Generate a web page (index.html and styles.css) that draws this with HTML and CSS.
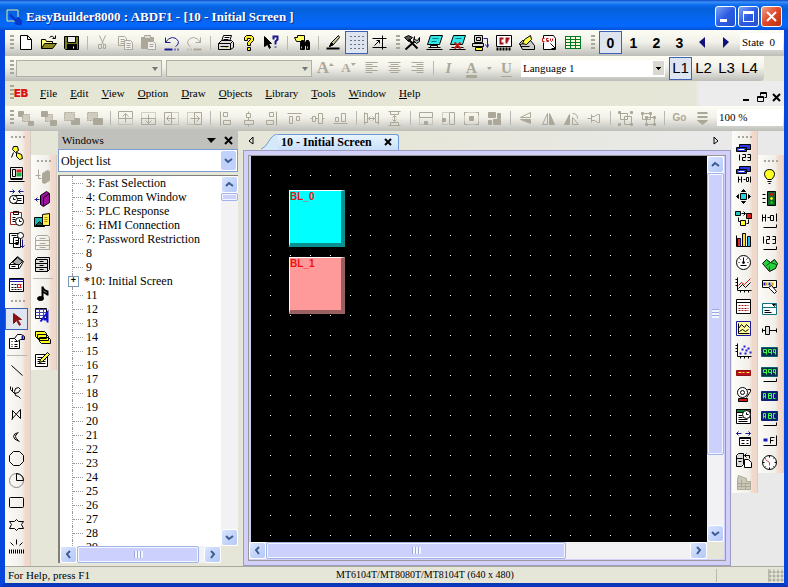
FILE: index.html
```html
<!DOCTYPE html>
<html lang="en">
<head>
<meta charset="utf-8">
<title>EasyBuilder8000</title>
<link rel="stylesheet" href="styles.css">
</head>
<body>
<div class="window">
<header class="titlebar">
  <svg class="logo" viewBox="0 0 18 18"><path d="M2 2h11v11H2z" fill="none" stroke="#d8f0a0"/><path d="M5 6l6 5 2-2 4 4-1 4-6-1 1-2-6-6z" fill="#0838c8" stroke="#0838c8"/></svg>
  <h1>EasyBuilder8000 : ABDF1 - [10 - Initial Screen ]</h1>
  <button class="cap" aria-label="Minimize"><svg viewBox="0 0 19 19"><path d="M4 12h7v3H4z" fill="#fff"/></svg></button>
  <button class="cap" aria-label="Maximize"><svg viewBox="0 0 19 19"><path d="M4 4h11v11H4zM5 7v7h9V7z" fill="#fff" fill-rule="evenodd"/></svg></button>
  <button class="cap close" aria-label="Close"><svg viewBox="0 0 19 19"><path d="M5 5l9 9M14 5l-9 9" stroke="#fff" stroke-width="2"/></svg></button>
</header>

<div class="bar" role="toolbar" aria-label="Standard">
  <i class="grip"></i>
  <button aria-label="New"><svg viewBox="-.5 -.5 17 17"><path d="M3 1h7l4 4v10H3zM10 1v4h4" fill="#fff"/></svg></button>
  <button aria-label="Open"><svg viewBox="-.5 -.5 17 17"><path d="M1 14V5h4l1 2h6v2" fill="#ffff70"/><path d="M1 14l3-5h12l-4 5z" fill="#8a8a20"/><path d="M9 3q3-3 5 1M15 1v3h-3"/></svg></button>
  <button aria-label="Save"><svg viewBox="-.5 -.5 17 17"><path d="M1 2h14v13H2l-1-1z" fill="#7a7a20"/><path d="M4 2h8v6H4z" fill="#eee"/><path d="M4 10h9v5H4z" fill="#000"/><path d="M10 12v2" stroke="#fff"/></svg></button>
  <i class="sep"></i>
  <button class="off" aria-label="Cut"><svg viewBox="-.5 -.5 17 17"><path d="M5 1l4 9M11 1L7 10M9 10h2v4h-2zM4 10h3v4H4z"/></svg></button>
  <button class="off" aria-label="Copy"><svg viewBox="-.5 -.5 17 17"><path d="M1 2h6l2 2v7H1zM3 5h4M3 7h4M3 9h4" /><path d="M7 6h6l2 2v7H7z" fill="#eee"/><path d="M9 9h4M9 11h4M9 13h4"/></svg></button>
  <button class="off" aria-label="Paste"><svg viewBox="-.5 -.5 17 17"><path d="M1 3h12v11H1z" fill="#aca899"/><path d="M4 1h6v3H4z" fill="#ddd"/><path d="M7 7h6l2 2v6H7z" fill="#eee"/><path d="M9 10h4M9 12h4"/></svg></button>
  <button class="navy" aria-label="Undo"><svg viewBox="-.5 -.5 17 17"><path d="M2 3v5h5M2 8q3-5 7-5t6 4q0 4-3 5"/><path d="M1 15h8M11 15h1M14 15h1" stroke-width="2"/></svg></button>
  <button class="off" aria-label="Redo"><svg viewBox="-.5 -.5 17 17"><path d="M14 3v5H9M14 8Q11 3 7 3T1 7q0 4 3 5"/><path d="M15 15H7M5 15H4M2 15H1" stroke-width="2"/></svg></button>
  <i class="sep"></i>
  <button aria-label="Print"><svg viewBox="-.5 -.5 17 17"><path d="M4 7l2-6h8l-2 6" fill="#fff"/><path d="M1 9l3-3h10l2 2v5l-3 2H1z" fill="#ddd"/><path d="M1 9h12v6M7 3h5M6 5h5M13 9l2-2M3 12h8" /><path d="M8 13h2" stroke="#cc0"/></svg></button>
  <button aria-label="Help"><svg viewBox="-.5 -.5 17 17"><path d="M4 6V3l2-2h5l2 2v3l-3 3v2H7V8l3-3V4H7v2z" fill="#ffec20"/><path d="M7 13h3v3H7z" fill="#ffec20"/></svg></button>
  <button aria-label="What's this"><svg viewBox="-.5 -.5 17 17"><path d="M1 2v10l3-2 2 4 1-1-2-4h3z" fill="#000"/><path d="M10 5V2h4v3l-2 2v3M12 12v1" stroke="#1a1a90" stroke-width="2"/></svg></button>
  <i class="sep"></i>
  <button aria-label="Find"><svg viewBox="-.5 -.5 17 17"><path d="M0 3h3V1h7v6H2z" fill="#ffff60"/><path d="M6 15V8l1-2h2l1 2h1l1-2h2l1 2v7h-3v-4h-2v4z" fill="#000"/><path d="M7 12v2M13 12v2" stroke="#aaa"/></svg></button>
  <i class="sep"></i>
  <button aria-label="Pen"><svg viewBox="-.5 -.5 17 17"><path d="M4 12l2-4 7-7 1 2-6 7z" fill="#cc9"/><path d="M4 12l2-4 2 2z" fill="#000"/><path d="M1 14h13" stroke-width="2"/></svg></button>
  <button class="on" aria-label="Grid" aria-pressed="true"><svg viewBox="-.5 -.5 17 17"><path d="M0 2h17M0 6h17M0 10h17M0 14h17" stroke-dasharray="1 3" stroke-dashoffset="-2"/></svg></button>
  <button aria-label="Snap"><svg viewBox="-.5 -.5 17 17"><path d="M1 4h14M1 13h14M11 1v14M3 11l5-5M5 6h3v3"/></svg></button>
  <i class="grip"></i>
  <button aria-label="Compile"><svg viewBox="-.5 -.5 17 17"><path d="M1 3l4-2 4 2-4 4z" fill="#555"/><path d="M5 5l9 9M12 6L2 15" stroke-width="2"/><path d="M11 2v3l3 1 2-3v4l-3 2-3-3z" fill="#aaa"/></svg></button>
  <button aria-label="Online simulation"><svg viewBox="-.5 -.5 17 17"><path d="M4 1h12l-3 9H1z" fill="#30e8e8"/><path d="M6 4h6M5 7h5" stroke="#077"/><path d="M4 11h7v2H4zM0 15h16M2 13h12"/></svg></button>
  <button aria-label="Offline simulation"><svg viewBox="-.5 -.5 17 17"><path d="M4 1h12l-3 9H1z" fill="#30e8e8"/><path d="M6 4h6" stroke="#077"/><path d="M0 15h16M2 13h12"/><path d="M5 8l6 6M11 8l-6 6" stroke="#c01818" stroke-width="2"/></svg></button>
  <button aria-label="Download"><svg viewBox="-.5 -.5 17 17"><path d="M2 1h8v7H2zM0 9h11v3H0z" fill="#ddd"/><path d="M4 3h4v3H4z"/><path d="M3 13h7v3H3z" fill="#ff3"/><path d="M11 4h4v8M13 10l2 3 1-3" stroke="#1a1a90"/></svg></button>
  <button aria-label="CF card"><svg viewBox="-.5 -.5 17 17"><path d="M1 1h15v11H1z" fill="#fff"/><path d="M2 13v3M5 13v3M8 13v3M11 13v3M14 13v3" stroke-width="2"/><path d="M8 4H5v5h3M14 4h-3v5M11 6h2" stroke="#a01010" stroke-width="2"/></svg></button>
  <button aria-label="Edit"><svg viewBox="-.5 -.5 17 17"><path d="M1 9l3-3h8l4 5v4H4z" fill="#ccc"/><path d="M1 10l5-1M2 12h9"/><path d="M4 9l2-4 6-4 1 4-5 5z" fill="#ffff40"/></svg></button>
  <button aria-label="CSV"><svg viewBox="-.5 -.5 17 17"><path d="M2 4V1h10l2 3v11H2V8" fill="#fff"/><path d="M9 9l5 5M14 10v4h-4"/><path d="M3 4H1v3h2M7 4H5v2h2v1H5M9 4v2l1 1 1-1V4" stroke="#d01010"/></svg></button>
  <button aria-label="Table"><svg viewBox="-.5 -.5 17 17"><path d="M1 2h15v12H1z" fill="#f8ffd8"/><path d="M1 2h15v12H1zM6 2v12M11 2v12M1 5h15M1 8h15M1 11h15" stroke="#007828"/></svg></button>
  <i class="grip wide"></i>
  <button class="num on" aria-pressed="true">0</button>
  <button class="num">1</button>
  <button class="num">2</button>
  <button class="num">3</button>
  <button aria-label="Previous state"><svg viewBox="0 0 17 17"><path d="M11 3v11L5 8z" fill="#10107a" stroke="none"/></svg></button>
  <button aria-label="Next state"><svg viewBox="0 0 17 17"><path d="M6 3v11l6-6z" fill="#10107a" stroke="none"/></svg></button>
  <input class="field" aria-label="State" value="State  0">
</div>

<div class="bar fontbar" role="toolbar" aria-label="Font">
  <i class="grip"></i>
  <span class="combo dim"><select disabled aria-label="Font"><option></option></select></span>
  <span class="combo dim"><select disabled aria-label="Size"><option></option></select></span>
  <button class="off letter big" aria-label="Larger">A<svg class="tick" viewBox="0 0 5 3"><path d="M0 3h5L2 0z"/></svg></button>
  <button class="off letter" aria-label="Smaller">A<svg class="tick" viewBox="0 0 5 3"><path d="M0 0h5L2 3z"/></svg></button>
  <button class="off" aria-label="Left"><svg viewBox="-.5 -.5 17 17"><path d="M2 2h12M2 4h7M2 6h12M2 8h7M2 10h12M2 12h7"/></svg></button>
  <button class="off" aria-label="Center"><svg viewBox="-.5 -.5 17 17"><path d="M2 2h12M4 4h8M2 6h12M4 8h8M2 10h12M4 12h8"/></svg></button>
  <button class="off" aria-label="Right"><svg viewBox="-.5 -.5 17 17"><path d="M2 2h12M7 4h7M2 6h12M7 8h7M2 10h12M7 12h7"/></svg></button>
  <i class="sep"></i>
  <button class="off letter italic">I</button>
  <button class="off letter color">A</button>
  <button class="off drop" aria-label="Font colour"><svg viewBox="0 0 5 3"><path d="M0 0h5L2 3z"/></svg></button>
  <button class="off letter under">U</button>
  <span class="combo lang"><select aria-label="Language"><option>Language 1</option></select></span>
  <button class="num lang-key on" aria-pressed="true">L1</button>
  <button class="num lang-key">L2</button>
  <button class="num lang-key">L3</button>
  <button class="num lang-key">L4</button>
</div>

<nav class="menubar">
  <i class="grip"></i>
  <strong class="eb">EB</strong>
  <button><u>F</u>ile</button><button><u>E</u>dit</button><button><u>V</u>iew</button><button><u>O</u>ption</button><button><u>D</u>raw</button><button><u>O</u>bjects</button><button><u>L</u>ibrary</button><button><u>T</u>ools</button><button><u>W</u>indow</button><button><u>H</u>elp</button>
  <span class="mdi">
    <button aria-label="Minimize window"><svg viewBox="0 0 10 10"><path d="M1 8h6" stroke-width="2"/></svg></button>
    <button aria-label="Restore window"><svg viewBox="-.5 -.5 10 10"><path d="M3 3V0h6v5H7M3 1h6M0 4h6v5H0zM0 5h6"/></svg></button>
    <button aria-label="Close window"><svg viewBox="0 0 10 10"><path d="M1 2l7 7M8 2L1 9" stroke-width="2"/></svg></button>
  </span>
</nav>

<div class="bar arrange" role="toolbar" aria-label="Arrange">
  <i class="grip"></i>
  <button class="off" aria-label="Front"><svg viewBox="-.5 -.5 17 17"><path class="s" d="M1 1h5v5H1zM11 11h5v4h-5z"/><path class="h" d="M5 4h7v7H5z"/></svg></button>
  <button class="off" aria-label="Back"><svg viewBox="-.5 -.5 17 17"><path class="h" d="M5 4h7v7H5z"/><path class="s" d="M1 1h6v5H1zM10 10h6v5h-6z"/></svg></button>
  <button class="off" aria-label="Forward"><svg viewBox="-.5 -.5 17 17"><path class="s" d="M8 8h8v6H8z"/><path class="h" d="M1 2h10v8H1z"/></svg></button>
  <button class="off" aria-label="Backward"><svg viewBox="-.5 -.5 17 17"><path class="h" d="M1 2h10v8H1z"/><path class="s" d="M7 8h9v6H7z"/></svg></button>
  <i class="sep"></i>
  <button class="off" aria-label="Nudge up"><svg viewBox="-.5 -.5 17 17"><path d="M1 8V1h14v7zM8 12V3M5 6l3-3 3 3"/><path class="d" d="M1 8v6h14V8"/></svg></button>
  <button class="off" aria-label="Nudge down"><svg viewBox="-.5 -.5 17 17"><path d="M1 14V8h14v6zM8 4v9M5 10l3 3 3-3"/><path class="d" d="M1 8V2h14v6"/></svg></button>
  <button class="off" aria-label="Nudge left"><svg viewBox="-.5 -.5 17 17"><path d="M1 2h7v12H1zM3 8h9M6 5L3 8l3 3"/><path class="d" d="M8 2h7v12H8"/></svg></button>
  <button class="off" aria-label="Nudge right"><svg viewBox="-.5 -.5 17 17"><path d="M8 2h7v12H8zM13 8H4M10 5l3 3-3 3"/><path class="d" d="M8 2H1v12h7"/></svg></button>
  <i class="sep"></i>
  <button class="off" aria-label="Align left"><svg viewBox="-.5 -.5 17 17"><path d="M3 1v14M6 2h4v4H6zM6 10h7v4H6z"/></svg></button>
  <button class="off" aria-label="Align middle"><svg viewBox="-.5 -.5 17 17"><path d="M8 1v2M8 7v3M8 14v2M6 3h4v4H6zM4 10h9v4H4z"/></svg></button>
  <button class="off" aria-label="Align right"><svg viewBox="-.5 -.5 17 17"><path d="M13 1v14M6 2h4v4H6zM3 10h7v4H3z"/></svg></button>
  <button class="off" aria-label="Align top"><svg viewBox="-.5 -.5 17 17"><path d="M1 3h14M3 6h3v7H3zM10 6h3v4h-3z"/></svg></button>
  <button class="off" aria-label="Align centre"><svg viewBox="-.5 -.5 17 17"><path d="M1 8h2M6 8h3M13 8h2M3 6h3v5H3zM9 3h4v10H9z"/></svg></button>
  <button class="off" aria-label="Align bottom"><svg viewBox="-.5 -.5 17 17"><path d="M1 13h14M3 7h3v4H3zM9 3h4v8H9z"/></svg></button>
  <i class="sep"></i>
  <button class="off" aria-label="Space across"><svg viewBox="-.5 -.5 17 17"><path d="M1 2v12M15 2v12M1 3h3v9H1M15 3h-3v9h3M5 8h6M7 6L5 8l2 2M9 6l2 2-2 2"/></svg></button>
  <button class="off" aria-label="Space down"><svg viewBox="-.5 -.5 17 17"><path d="M2 1h12M2 15h12M4 1v3h8V1M4 15v-3h8v3M8 5v6M6 7l2-2 2 2M6 9l2 2 2-2"/></svg></button>
  <i class="sep"></i>
  <button class="off" aria-label="Same width"><svg viewBox="-.5 -.5 17 17"><path d="M2 2h13v5H2z"/><path class="d" d="M2 8v6h13V8"/><path class="s" d="M7 11h3v3H7z"/></svg></button>
  <button class="off" aria-label="Same height"><svg viewBox="-.5 -.5 17 17"><path d="M9 2h5v12H9z"/><path class="d" d="M8 2H2v12h6"/><path class="s" d="M2 8h3v3H2z"/></svg></button>
  <button class="off" aria-label="Same size"><svg viewBox="-.5 -.5 17 17"><path class="d" d="M1 2h14v12H1z"/><path d="M3 2H1v3M13 2h2v3M1 11v3h3M15 11v3h-3"/><path class="s" d="M6 6h4v4H6z"/></svg></button>
  <button class="off" aria-label="Layers"><svg viewBox="-.5 -.5 17 17"><path class="s" d="M2 2h7v5H2zM7 9h7v5H7zM11 3h3v5h-3zM2 10h3v4H2z"/></svg></button>
  <i class="sep"></i>
  <button class="off" aria-label="Flip vertical"><svg viewBox="-.5 -.5 17 17"><path d="M13 2v5H3z"/><path class="s" d="M3 9h10v4z"/></svg></button>
  <button class="off" aria-label="Flip horizontal"><svg viewBox="-.5 -.5 17 17"><path d="M7 3v11H2z"/><path class="s" d="M9 3v11h5z"/></svg></button>
  <button class="off" aria-label="Rotate"><svg viewBox="-.5 -.5 17 17"><path class="s" d="M6 4v10H1z"/><path d="M9 7l6 7H9zM9 3q5 0 5 5"/></svg></button>
  <button class="off" aria-label="Pin"><svg viewBox="-.5 -.5 17 17"><path d="M1 8h4M5 4v8M5 6h3l3-2h2v8h-2l-3-2H5"/></svg></button>
  <i class="sep"></i>
  <button class="off" aria-label="Group"><svg viewBox="-.5 -.5 17 17"><path d="M3 3h7v6H3zM7 6h7v8H7z"/><path class="s" d="M1 1h2v2H1zM13 1h2v2h-2zM1 13h2v2H1zM13 13h2v2h-2z"/></svg></button>
  <button class="off" aria-label="Ungroup"><svg viewBox="-.5 -.5 17 17"><path d="M2 3h8v6H2zM6 7h8v7H6z"/><path class="s" d="M1 2h2v2H1zM9 2h2v2H9zM5 13h2v2H5zM13 13h2v2h-2zM13 6h2v2h-2zM5 6h2v2H5z"/></svg></button>
  <i class="sep"></i>
  <button class="off go">Go</button>
  <button class="off" aria-label="More"><svg viewBox="-.5 -.5 17 17"><path d="M3 2h10M3 3h10M3 6h10M3 7h10"/><path class="s" d="M3 10h10l-5 4z"/></svg></button>
  <input class="field" aria-label="Zoom" value="100 %">
</div>

<main class="work">
  <div class="col" role="toolbar" aria-label="Draw">
    <i class="grip h"></i>
    <button aria-label="Key"><svg viewBox="-.5 -.5 17 17"><path d="M5 2h4l1 4-3 2-3-3z" fill="#ffff30"/><path d="M5 8l-2 5M8 8l5 2 1 4-3 1-3-3z" fill="#ffff30"/></svg></button>
    <button aria-label="System"><svg viewBox="-.5 -.5 17 17"><path d="M2 1h12v11H2z" fill="#eee"/><path d="M4 3h3v7H4zM0 15h16M2 13h12"/><path d="M8 3h5v3H8z" fill="#e02020" stroke="none"/><path d="M8 6h5v4H8z" fill="#20b040" stroke="none"/></svg></button>
    <button aria-label="Schedule"><svg viewBox="-.5 -.5 17 17"><path d="M1 3h5M4 1l2 2-2 2M15 3h-5M12 1l-2 2 2 2" stroke="#1a1a90"/><path d="M4 7h11v8H4z" fill="#fff"/><path d="M9 10h4M9 12h4"/><circle cx="5" cy="11" r="4" fill="#fff"/><path d="M5 9v2h2"/></svg></button>
    <button aria-label="Recipe"><svg viewBox="-.5 -.5 17 17"><path d="M2 2h11v12H2z" fill="#fff" stroke="#a02020"/><path d="M5 1h5v3H5zM4 7h3M4 9h3M4 11h3"/><circle cx="11" cy="11" r="4" fill="#fff"/><path d="M11 9v2h2"/></svg></button>
    <button aria-label="Log"><svg viewBox="-.5 -.5 17 17"><path d="M1 1h9v10H1zM5 5h7v10H5z" fill="#fff"/><path d="M3 3h5M7 8h3M7 10h3M7 12h3"/><circle cx="12" cy="3" r="3" fill="#fff"/><path d="M14 7v8M12 13l2 2 2-2" stroke="#1a1a90"/></svg></button>
    <button aria-label="Card"><svg viewBox="-.5 -.5 17 17"><path d="M1 10l8-8 6 5-4 7H1z" fill="#fff"/><path d="M4 8l5-5 5 4-4 4z" fill="#aaa"/><path d="M1 10h9v4H1zM3 12h4" fill="#fff"/></svg></button>
    <button aria-label="Calendar"><svg viewBox="-.5 -.5 17 17"><path d="M1 2h14v13H1z" fill="#fff"/><path d="M1 3h14M1 5h14" stroke="#2020a0"/><path d="M3 8h10M3 11h10M3 13h10" stroke-dasharray="2 1"/><path d="M9 8h3v3H9z" stroke="#d01010"/></svg></button>
    <i class="grip h tall"></i>
    <button class="on" aria-label="Select" aria-pressed="true"><svg viewBox="-.5 -.5 17 17"><path d="M5 2v10l3-3 3 5 1-1-3-5h4z" fill="#8c1010" stroke="#8c1010"/></svg></button>
    <button aria-label="Properties"><svg viewBox="-.5 -.5 17 17"><path d="M1 5h10v10H1z" fill="#fff"/><path d="M3 8h1M6 8h3M3 11h1M6 11h3M3 13h1M6 13h3"/><path d="M6 5l3-4h4l3 2v3h-4l-3 2z" fill="#fff"/><path d="M14 2v4" stroke="#1a1a90" stroke-width="2"/></svg></button>
    <i class="sep h"></i>
    <button aria-label="Line"><svg viewBox="-.5 -.5 17 17"><path d="M3 3l11 10"/></svg></button>
    <button aria-label="Curve"><svg viewBox="-.5 -.5 17 17"><path d="M2 2v3l4 4 4-1 2-3-2-2-3 1-1 3 1 4 3 1 2 2M4 3v4"/></svg></button>
    <button aria-label="Polyline"><svg viewBox="-.5 -.5 17 17"><path d="M4 13V4l8 8V3L3 13"/></svg></button>
    <button aria-label="Arc"><svg viewBox="-.5 -.5 17 17"><path d="M10 4q-5 1-5 4t6 5M9 5q-2 1-2 3t3 4"/></svg></button>
    <button aria-label="Ellipse"><svg viewBox="-.5 -.5 17 17"><path d="M5 1h6l4 4v6l-4 4H5l-4-4V5z"/></svg></button>
    <button aria-label="Pie"><svg viewBox="-.5 -.5 17 17"><circle cx="8" cy="8" r="7" stroke="#888"/><path d="M8 1v7h7q0-6-7-7z"/></svg></button>
    <button aria-label="Rectangle"><svg viewBox="-.5 -.5 17 17"><rect x="1" y="3" width="14" height="10" rx="1"/></svg></button>
    <button aria-label="Polygon"><svg viewBox="-.5 -.5 17 17"><path d="M8 3l2 2h5l-2 3 2 4h-5l-2 2-2-2H1l2-4-2-3h5z"/></svg></button>
    <button aria-label="Scale"><svg viewBox="-.5 -.5 17 17"><path d="M1 11v4M3 11v4M5 11v4M7 11v4M9 11v4M11 11v4M13 11v4M15 11v4M8 1v5M2 4l3 3M14 4l-3 3"/></svg></button>
    <button aria-label="Text"><svg viewBox="-.5 -.5 17 17"><path d="M6 7h2M11 6v2M5 8h4"/></svg></button>
  </div>
  <div class="col short" role="toolbar" aria-label="Library">
    <i class="grip h"></i>
    <button class="off" aria-label="Import"><svg viewBox="-.5 -.5 17 17"><path class="s" d="M8 5l5-3 2 1v9l-5 3-2-1z"/><path d="M1 7h5M4 1v9h3"/></svg></button>
    <button aria-label="Library"><svg viewBox="-.5 -.5 17 17"><path d="M6 5l6-4 3 2v9l-6 4-3-2z" fill="#a010a0"/><path d="M9 7l6-4M9 7v8"/><path d="M0 9h5M3 7L1 9l2 2" stroke="#1a1a90"/></svg></button>
    <button aria-label="Pictures"><svg viewBox="-.5 -.5 17 17"><path d="M0 5h10v9H0z" fill="#20b8b8"/><path d="M1 13l4-4 4 4z" fill="#086040"/><path d="M8 2l7-1v12H8z" fill="#fff050"/><path d="M10 5h3M10 7h3M10 9h3" stroke="#a80"/></svg></button>
    <button class="off" aria-label="Drawer"><svg viewBox="-.5 -.5 17 17"><path d="M1 3l2-2h10l2 2v12H1zM1 6h14M1 11h14M5 4h6M5 9h6M5 13h6"/></svg></button>
    <button aria-label="Cabinet"><svg viewBox="-.5 -.5 17 17"><path d="M1 3l2-2h12v12l-2 2H1z" fill="#ddd"/><path d="M1 3h12v12M1 7h12M1 11h12M5 5h4M5 9h4M5 13h4"/></svg></button>
    <i class="sep h"></i>
    <button aria-label="Sound"><svg viewBox="-.5 -.5 17 17"><path d="M8 13V1q0 3 5 5v4M8 6l5 3" stroke-width="2"/><ellipse cx="6" cy="13" rx="3" ry="2" fill="#000"/></svg></button>
    <button aria-label="Label"><svg viewBox="-.5 -.5 17 17"><path d="M1 1h11v10H1z" fill="#fff"/><path d="M1 2h11M1 5h11M1 8h11M5 1v10M9 1v10" stroke="#44a"/><path d="M6 14l7-9v10M9 12h4" stroke="#1010e0" stroke-width="2"/></svg></button>
    <button aria-label="Tags"><svg viewBox="-.5 -.5 17 17"><path d="M1 2h9l2 2v5H3L1 7zM3 5h9l2 2v4H5L3 9zM5 8h9l2 2v4H7l-2-2z" fill="#ffff20"/></svg></button>
    <button aria-label="Macro"><svg viewBox="-.5 -.5 17 17"><path d="M1 3h12v12H1z" fill="#fff"/><path d="M3 6h8M3 8h8M3 10h8M3 12h8"/><path d="M5 11l1-3 7-7 2 2-7 7z" fill="#ff3"/></svg></button>
  </div>

  <section class="panel">
    <header class="panelhead"><h2>Windows</h2>
      <button aria-label="Menu"><svg viewBox="0 0 9 5"><path d="M0 0h9L4 5z" fill="#000" stroke="none"/></svg></button>
      <button aria-label="Close panel"><svg viewBox="0 0 9 9"><path d="M1 1l7 7M8 1L1 8" stroke-width="2"/></svg></button>
    </header>
    <span class="combo objects"><select aria-label="List kind"><option>Object list</option></select><svg class="chev" viewBox="-3 -5 15 19"><path d="M1 3l3 3 4-3"/></svg></span>
    <div class="treebox">
      <ul class="tree">
        <li>3: Fast Selection</li><li>4: Common Window</li><li>5: PLC Response</li><li>6: HMI Connection</li><li>7: Password Restriction</li><li>8</li><li>9</li><li class="node">*10: Initial Screen</li><li>11</li><li>12</li><li>13</li><li>14</li><li>15</li><li>16</li><li>17</li><li>18</li><li>19</li><li>20</li><li>21</li><li>22</li><li>23</li><li>24</li><li>25</li><li>26</li><li>27</li><li>28</li><li>29</li>
      </ul>
      <div class="sb v"><button aria-label="Up"><svg viewBox="0 0 9 9"><path d="M1 6l3-3 4 3"/></svg></button><i class="thumb t1"></i><i class="fill"></i><button aria-label="Down"><svg viewBox="0 0 9 9"><path d="M1 3l3 3 4-3"/></svg></button></div>
      <div class="sb x"><button aria-label="Left"><svg viewBox="0 0 9 9"><path d="M6 1L3 4l3 4"/></svg></button><i class="thumb t2"></i><i class="fill"></i><button aria-label="Right"><svg viewBox="0 0 9 9"><path d="M3 1l3 3-3 4"/></svg></button></div>
    </div>
  </section>

  <section class="doc">
    <div class="tabs">
      <button class="nav" aria-label="Previous tab"><svg viewBox="0 0 7 10"><path d="M5 1v7L1 5z"/></svg></button>
      <div class="tab"><svg class="slope" viewBox="0 0 17 16"><path d="M0 16Q4 15 8 7T17 0v16z" fill="#d5e9fb" stroke="none"/><path d="M0 15Q4 14 8 7T17 0" stroke="#6f9cd0"/></svg><span>10 - Initial Screen</span><button aria-label="Close tab"><svg viewBox="0 0 9 9"><path d="M1 1l6 6M7 1L1 7" stroke-width="2"/></svg></button></div>
      <button class="nav last" aria-label="Next tab"><svg viewBox="0 0 7 10"><path d="M1 1v7l4-3z"/></svg></button>
    </div>
    <div class="frame">
      <div class="canvas">
        <div class="lamp bl0">BL_0</div>
        <div class="lamp bl1">BL_1</div>
      </div>
      <div class="sb v"><button aria-label="Up"><svg viewBox="0 0 9 9"><path d="M1 6l3-3 4 3"/></svg></button><i class="thumb t3"></i><i class="fill"></i><button aria-label="Down"><svg viewBox="0 0 9 9"><path d="M1 3l3 3 4-3"/></svg></button></div>
      <div class="sb x"><button aria-label="Left"><svg viewBox="0 0 9 9"><path d="M6 1L3 4l3 4"/></svg></button><i class="thumb t4"></i><i class="fill"></i><button aria-label="Right"><svg viewBox="0 0 9 9"><path d="M3 1l3 3-3 4"/></svg></button></div>
    </div>
  </section>

  <div class="col end" role="toolbar" aria-label="Objects">
    <i class="grip h"></i>
    <button aria-label="Set word"><svg viewBox="-.5 -.5 17 17"><path d="M4 0h11v5H4zM1 3h10v4H1z" fill="#2838e0"/><path d="M3 5h6" stroke="#fff"/><path d="M4 10v6M7 10h3v3H7v3h3M12 10h3v6h-3M12 13h3"/></svg></button>
    <button aria-label="Set bit"><svg viewBox="-.5 -.5 17 17"><path d="M4 0h11v5H4zM1 3h10v4H1z" fill="#2838e0"/><path d="M3 5h6" stroke="#fff"/><path d="M3 10v6M3 13h2M6 10v6M8 13h2M11 11h2v4h-2zM15 10v6"/></svg></button>
    <button aria-label="Move"><svg viewBox="-.5 -.5 17 17"><path d="M5 5h6v6H5z" fill="#20d8e0"/><path d="M8 1l2 2H6zM8 15l2-2H6zM1 8l2-2v4zM15 8l-2-2v4z" fill="#000"/></svg></button>
    <button aria-label="Animation"><svg viewBox="-.5 -.5 17 17"><path d="M0 1h5v4H0z" fill="#20c8c8"/><path d="M11 3h5v5h-5z" fill="#e01818"/><path d="M5 10h5v5H5z" fill="#ff3"/><path d="M6 3h4M8 1l2 2-2 2M3 7v4h2M13 9v4h-2"/></svg></button>
    <button aria-label="Bar graph"><svg viewBox="-.5 -.5 17 17"><path d="M1 3v11h14"/><path d="M2 6h3v8H2z" fill="#e03020"/><path d="M7 1h3v13H7z" fill="#ffe020"/><path d="M12 4h3v10h-3z" fill="#20b8f0"/><path d="M5 6v8M10 2v12" stroke="#1818a0"/></svg></button>
    <button aria-label="Meter"><svg viewBox="-.5 -.5 17 17"><circle cx="8" cy="8" r="7" fill="#fff"/><path d="M8 3v5M3 8h1M12 8h1M4 4l1 1M12 4l-1 1M5 11h6"/><circle cx="8" cy="8" r="1" fill="#000"/></svg></button>
    <button aria-label="Trend"><svg viewBox="-.5 -.5 17 17"><path d="M2 1v13h14M0 3h2M0 6h2M0 9h2M5 14v2M9 14v2M13 14v2"/><path d="M3 9l3-3 3 2 6-6" stroke="#e01010"/><path d="M3 12l4-4 3 3 5-5"/></svg></button>
    <button aria-label="History table"><svg viewBox="-.5 -.5 17 17"><path d="M1 1h14v14H1zM1 4h14" fill="#fff"/><path d="M3 7h10M3 10h10M3 12h10" stroke="#901010" stroke-dasharray="2 1"/></svg></button>
    <button aria-label="Picture trend"><svg viewBox="-.5 -.5 17 17"><path d="M1 1h14v14H1z" fill="#ffffa0" stroke="#1818a0"/><path d="M3 3v10h11M3 8l3-4 3 3 2-3 3 3M4 11l3-2 3 2 3-2"/></svg></button>
    <button aria-label="Scatter"><svg viewBox="-.5 -.5 17 17"><path d="M2 1v13h14M0 3h2M0 6h2M0 9h2M5 14v2M9 14v2M13 14v2"/><path d="M4 11h2M6 7h2M8 4h2M10 8h2M12 6h2M14 10h2M9 11h2" stroke="#2020d0" stroke-width="2"/></svg></button>
    <button aria-label="Alarm bar"><svg viewBox="-.5 -.5 17 17"><path d="M1 6h14v5H1z" fill="#c01020" stroke="#901010"/><path d="M3 8h3M7 8h2M11 8h3" stroke="#ff3"/></svg></button>
    <button aria-label="Alarm"><svg viewBox="-.5 -.5 17 17"><circle cx="7" cy="6" r="5" fill="#fff"/><circle cx="7" cy="6" r="2"/><path d="M12 3h3M15 3v2l-4 6"/><path d="M3 12h9v3H3z" fill="#d01818"/></svg></button>
    <button aria-label="Event log"><svg viewBox="-.5 -.5 17 17"><path d="M1 1h14v14H1z" fill="#fff"/><path d="M1 1h14v3H1z" fill="#108030"/><path d="M3 7h4M3 9h4M3 11h9M3 13h9"/><circle cx="11" cy="6" r="4" fill="#fff"/><path d="M11 4v2h2"/></svg></button>
    <button aria-label="Transfer"><svg viewBox="-.5 -.5 17 17"><path d="M1 3h5M3 1L1 3l2 2M10 3h5M13 1l2 2-2 2" stroke="#1a1a90"/><path d="M4 7h11v8H4z" fill="#fff"/><path d="M4 8h11M6 10h3M11 10h2M6 13h3M11 13h2"/></svg></button>
    <button aria-label="Backup"><svg viewBox="-.5 -.5 17 17"><path d="M1 3l2-2h5v11l-2 2H1zM1 6h6M3 9h3" fill="#ddd"/><path d="M9 7h4l3 3v5H9z" fill="#fff"/><path d="M9 3h5v3M11 1L9 3l2 2"/></svg></button>
    <button class="off" aria-label="Media"><svg viewBox="-.5 -.5 17 17"><path d="M2 5l1-4 8 3v3h4v8H2z" fill="#ccc8b8"/><path d="M2 9h13M2 12h13M6 5v8M10 9v6"/></svg></button>
  </div>
  <div class="col short end" role="toolbar" aria-label="Parts">
    <i class="grip h"></i>
    <button aria-label="Bit lamp"><svg viewBox="-.5 -.5 17 17"><path d="M6 11q-3-3-3-5 0-5 5-5t5 5q0 2-3 5z" fill="#ffff20"/><path d="M6 13h4M7 15h2"/></svg></button>
    <button aria-label="Word lamp"><svg viewBox="-.5 -.5 17 17"><path d="M6 1h8v14H6z" fill="#186030"/><circle cx="10" cy="4" r="1" fill="red" stroke="red"/><circle cx="10" cy="8" r="1" fill="#ff0" stroke="#ff0"/><circle cx="10" cy="12" r="1" fill="#0d0" stroke="#0d0"/><path d="M1 4h3M1 8h3M1 12h3"/></svg></button>
    <button aria-label="Bit switch"><svg viewBox="-.5 -.5 17 17"><path d="M1 2v7M1 5h3M4 2v7M6 5h3M9 3h3v5H9zM15 1v8M15 12v3H2"/></svg></button>
    <button aria-label="Word switch"><svg viewBox="-.5 -.5 17 17"><path d="M2 2v7M5 2h3v3H5v4h3M11 2h3v7h-3M11 5h3M15 12v3H2"/></svg></button>
    <button aria-label="Function key"><svg viewBox="-.5 -.5 17 17"><path d="M1 7l4-4 4 3 4-3 3 4-2 5-6 3z" fill="#28d040"/><path d="M5 9l4-3 6 2M8 14v-4" stroke="#085018"/></svg></button>
    <button aria-label="Toggle"><svg viewBox="-.5 -.5 17 17"><path d="M1 2h14v7H1z" fill="#ffffd8"/><path d="M3 4v3M8 4v3" stroke="#1818d0" stroke-width="2"/><path d="M5 4v3M11 4v3" stroke="#c90" stroke-width="2"/><path d="M7 9l3-2 5 6-2 2-4-4z" fill="#fff"/></svg></button>
    <button aria-label="Option list"><svg viewBox="-.5 -.5 17 17"><path d="M1 3h14v4H1zM1 7h14v7H1z" fill="#fff" stroke="#107080"/><path d="M11 4h3l-1 2zM3 10h5M3 12h7"/></svg></button>
    <button aria-label="Slider"><svg viewBox="-.5 -.5 17 17"><path d="M1 8h3M8 8h7M4 4h4v8H4zM15 6v4M1 6v4" fill="#ddd"/></svg></button>
    <button aria-label="Numeric display"><svg viewBox="-.5 -.5 17 17"><path d="M0 3h16v9H0z" fill="#053050" stroke="#106070"/><path d="M5 8H2V5h3v5M10 8H7V5h3v5M14 8h-2V5h2v5" stroke="#40ff40"/></svg></button>
    <button aria-label="Numeric input"><svg viewBox="-.5 -.5 17 17"><path d="M0 1h16v9H0z" fill="#053050" stroke="#106070"/><path d="M5 6H2V3h3v5M10 6H7V3h3v5M14 6h-2V3h2v5" stroke="#40ff40"/><path d="M15 12v3H2"/></svg></button>
    <button aria-label="Text display"><svg viewBox="-.5 -.5 17 17"><path d="M0 3h16v9H0z" fill="#082070" stroke="#102080"/><path d="M2 10V5h2v5M2 8h2M7 5h3v5H7zM7 7h3M14 5h-2v5h2" stroke="#40ff40"/></svg></button>
    <button aria-label="Text input"><svg viewBox="-.5 -.5 17 17"><path d="M0 1h16v9H0z" fill="#082070" stroke="#102080"/><path d="M2 8V3h2v5M2 6h2M7 3h3v5H7zM7 5h3M14 3h-2v5h2" stroke="#40ff40"/><path d="M15 12v3H2"/></svg></button>
    <button aria-label="Keypad"><svg viewBox="-.5 -.5 17 17"><path d="M3 7h2v1H3z" stroke="#1818c0" stroke-width="2"/><path d="M9 11V5h4M9 8h3M15 3v10H2"/></svg></button>
    <button aria-label="Clock"><svg viewBox="-.5 -.5 17 17"><circle cx="8" cy="8" r="7" fill="#fff"/><path d="M8 1v2M8 13v2M1 8h2M13 8h2M3 3l1 1M13 3l-1 1M3 13l1-1M13 13l-1-1"/><path d="M8 11V8L4 5" stroke="#e04040"/></svg></button>
  </div>
</main>

<footer class="status"><span>For Help, press F1</span><span class="model">MT6104T/MT8080T/MT8104T (640 x 480)</span><span class="cell"></span><span class="cell corner"></span></footer>
</div>
</body>
</html>
```
FILE: styles.css
```css
* { box-sizing: border-box; }
body {
  margin: 0;
  height: 100vh;
  overflow: hidden;
  font: 12px/14px "Liberation Serif", serif;
  color: #000;
}
button, select, input { font: inherit; color: inherit; margin: 0; }
button { border: 0; padding: 0; background: none; }
i { font-style: normal; }
svg { fill: none; stroke: #000; display: block; flex: none; }

.window {
  height: 100%;
  display: flex;
  flex-direction: column;
  background: #e6e6d8;
  border: solid #0646dc;
  border-width: 0 4px 4px 5px;
  border-bottom-color: #0838b8;
}

/* title bar */
.titlebar {
  flex: none;
  display: flex;
  align-items: center;
  gap: 4px;
  height: 30px;
  margin: 0 -4px 0 -5px;
  padding: 3px 6px 0 5px;
  background: linear-gradient(#0848c8, #3c90f8 2px, #0a6cf0 5px, #0560d8 9px, #0565f0 18px, #0568ff 26px, #0450d0);
}
.titlebar h1 {
  flex: 1;
  margin: 0;
  font-size: 13px;
  line-height: 16px;
  color: #fff;
  text-shadow: 1px 1px #0a2a80;
}
.logo { width: 18px; height: 18px; margin-right: -1px; }
.cap {
  width: 21px;
  height: 21px;
  margin-right: -2px;
  border: 1px solid #fff;
  border-radius: 3px;
  background: linear-gradient(135deg, #7ba4f4, #2c5ce4 50%, #2450d0);
}
.cap svg { width: 19px; height: 19px; stroke: none; }
.close { margin-right: 0; background: linear-gradient(135deg, #f0a088, #e04828 50%, #b83010); }

/* horizontal toolbars */
.bar {
  flex: none;
  display: flex;
  align-items: center;
  height: 26px;
  padding-bottom: 1px;
  background: linear-gradient(#fefdf4, #f3f2ea 45%, #d2d2cc 80%, #bebeb8);
}
.bar button {
  flex: none;
  width: 23px;
  height: 23px;
  display: flex;
  align-items: center;
  justify-content: center;
}
.bar button svg { width: 17px; height: 17px; }
.grip {
  flex: none;
  width: 9px;
  height: 16px;
  background: conic-gradient(from 90deg at 2px 2px, transparent 270deg, #a8a89a 0) 3px 0 / 6px 4px repeat-y;
}
.grip.wide { width: 15px; background-position: 5px 0; }
.sep {
  flex: none;
  width: 8px;
  height: 14px;
  background: linear-gradient(#b8b8b0, #b8b8b0) center / 1px 100% no-repeat;
}
.off { color: #aca899; }
.off svg { stroke: #aca899; }
.off .s { fill: #aca899; }
.off .h { fill: #d0cdc0; stroke-dasharray: 2 1; }
.off .d { stroke-dasharray: 1 1; }
.navy svg { stroke: #1a1a90; }
.bar .on, .col .on {
  background: #dfe5f0;
  border: 1px solid #3c62b8;
}
.bar .num { font: bold 14px/20px "Liberation Sans", sans-serif; }
.bar .lang-key { font-size: 15px; font-weight: normal; }
.field {
  flex: 1;
  min-width: 0;
  height: 17px;
  margin: 0 1px 2px 3px;
  padding: 0 2px;
  border: 0;
  background: #fff;
  white-space: pre;
  font-size: 11px;
}

/* font toolbar */
.fontbar { height: 25px; margin-right: 20px; padding-right: 3px; border-radius: 0 0 4px 0; }
.combo { position: relative; display: flex; flex: none; }
.combo select {
  width: 100%;
  padding: 0 4px;
  appearance: none;
  border: 0;
  border-radius: 0;
  background: #fff;
}
.combo::after {
  content: "";
  position: absolute;
  right: 4px;
  top: 7px;
  border: solid transparent;
  border-width: 4px 3px 0;
  border-top-color: #777;
  pointer-events: none;
}
.combo.dim { width: 146px; height: 17px; margin: 0 2px; }
.combo.dim select { background: #e6e6d8; border: 1px solid #b0b0a4; opacity: 1; }
.bar .letter { font: bold 15px/16px "Liberation Serif", serif; }
.bar .letter:has(.tick) { font-size: 13px; }
.bar .letter.big { font-size: 17px; }
.bar .letter .tick, .bar .drop svg { width: 5px; height: 3px; fill: #aca899; stroke: none; }
.bar .letter .tick { margin-bottom: 8px; }
.bar .letter.italic { font-style: italic; }
.letter.color { text-decoration: underline 3px; text-underline-offset: 2px; }
.letter.under { text-decoration: underline; text-underline-offset: 3px; }
.bar .drop { width: 12px; }
.combo.lang { flex: 1; height: 17px; margin: 0 4px 0 3px; font-size: 11px; }
.combo.lang select { padding: 0 2px; }
.combo.lang::after {
  border: 0;
  top: 1px;
  right: 1px;
  width: 11px;
  height: 14px;
  background:
    linear-gradient(#000, #000) 3px 6px / 5px 1px no-repeat,
    linear-gradient(#000, #000) 4px 7px / 3px 1px no-repeat,
    linear-gradient(#000, #000) 5px 8px / 1px 1px no-repeat,
    #d8d8d0;
}

/* menu bar */
.menubar {
  flex: none;
  display: flex;
  align-items: center;
  height: 25px;
  padding-bottom: 1px;
  background: linear-gradient(90deg, #e6e6d4, #e6e6d8 690px, #ececec 695px);
}
.menubar > button { margin-right: 13px; font-size: 11px; line-height: 16px; }
.eb { width: 26px; font: 900 11px/14px Inter, "Liberation Sans", sans-serif; color: #e01010; }
.mdi { margin-left: auto; display: flex; gap: 5px; padding: 8px 2px 0 0; }
.mdi svg { width: 10px; height: 10px; }

.arrange { height: 25px; }
.bar .go { font: bold 10px/14px "Liberation Sans", sans-serif; }

/* main area */
.work {
  flex: 1;
  min-height: 0;
  display: flex;
  background: linear-gradient(90deg, #e6e6d8 50%, #e9e9e9 90%);
}
.col {
  flex: none;
  width: 26px;
  display: flex;
  flex-direction: column;
  align-items: flex-start;
  overflow: hidden;
  background: linear-gradient(90deg, #fdfcf8, #f0efe9 65%, #f2d8c9 80%, #eed8cc 94%, #c9c9c0);
}
.col.short { margin-top: 24px; align-self: flex-start; }
.col.end { align-self: flex-start; }
.col button {
  flex: none;
  width: 23px;
  height: 22px;
  display: flex;
  align-items: center;
  justify-content: center;
}
.col svg { width: 17px; height: 17px; }
.grip.h {
  width: 16px;
  height: 10px;
  margin-left: 4px;
  background: conic-gradient(from 90deg at 2px 2px, transparent 270deg, #a8a89a 0) 0 5px / 4px 10px repeat-x;
}
.grip.h.tall { height: 13px; }
.sep.h {
  width: 20px;
  height: 7px;
  margin-left: 2px;
  background: linear-gradient(#b8b8b0, #b8b8b0) center / 100% 1px no-repeat;
}

/* windows panel */
.panel {
  flex: none;
  width: 180px;
  display: flex;
  flex-direction: column;
  margin: 0 5px 3px 1px;
}
.panelhead {
  display: flex;
  align-items: center;
  gap: 8px;
  height: 18px;
  padding: 0 5px 0 4px;
  background: #c0c0bc;
}
.panelhead h2 { flex: 1; margin: 0; font-size: 11px; font-weight: normal; }
.panelhead button svg { width: 9px; height: 9px; }
.panelhead button:first-of-type svg { height: 5px; }
.objects { height: 23px; margin-bottom: 3px; }
.objects select { border: 1px solid #7a9cd0; padding: 0 2px; }
.objects::after { content: none; }
.chev {
  position: absolute;
  right: 2px;
  top: 2px;
  width: 15px;
  height: 19px;
  border-radius: 2px;
  background: #c0d2fc;
  stroke: #3c5c90;
  stroke-width: 2;
  pointer-events: none;
}
.treebox {
  flex: 1;
  min-height: 0;
  display: grid;
  grid-template: minmax(0, 1fr) 17px / minmax(0, 1fr) 17px;
  border: solid #808078;
  border-width: 1px 0 0 2px;
}
.tree {
  margin: 0;
  padding: 0;
  list-style: none;
  overflow: hidden;
  background: #fff;
}
.tree li {
  display: flex;
  align-items: center;
  height: 14px;
  margin-left: 12px;
  border-left: 1px dotted #999;
  white-space: nowrap;
}
.tree li::before { content: ""; width: 10px; margin-right: 3px; border-top: 1px dotted #999; }
.tree .node::before {
  content: "+";
  width: 9px;
  height: 9px;
  margin: 0 5px 0 -5px;
  border: 1px solid #7898b8;
  background: #fff;
  font: bold 9px/7px "Liberation Sans", sans-serif;
  text-align: center;
}

/* scrollbars */
.sb { display: flex; background: #f2f2f4; }
.sb.v { flex-direction: column; }
.sb button {
  flex: none;
  width: 17px;
  height: 17px;
  display: flex;
  align-items: center;
  justify-content: center;
  border: 1px solid #fff;
  border-radius: 3px;
  background: linear-gradient(135deg, #d8e4ff, #b4c8f8);
}
.sb button svg { width: 9px; height: 9px; stroke: #3c5c90; stroke-width: 2; }
.thumb {
  flex: none;
  border: 1px solid #a0b4e8;
  border-radius: 2px;
  background: #ccd0fc;
  box-shadow: inset 0 0 0 1px #f4f6ff;
}
.fill { flex: 1; }
.t1 { height: 8px; }
.t2 { flex: 0 1 122px; }
.t3 { flex: 0 1 73%; }
.t4 { flex: 0 1 300px; }
.t2, .t4 {
  background: repeating-linear-gradient(90deg, #9aa8e0 0 1px, #f4f6ff 1px 3px) center / 9px 7px no-repeat, #ccd0fc;
}
.t3 { background: repeating-linear-gradient(#9aa8e0 0 1px, #f4f6ff 1px 3px) center / 7px 9px no-repeat, #ccd0fc; }

/* document */
.doc { flex: 1; min-width: 0; display: flex; flex-direction: column; margin-right: 1px; }
.tabs { flex: none; display: flex; align-items: flex-end; height: 19px; padding: 0 11px 0 5px; }
.nav { padding-bottom: 4px; }
.nav svg { width: 7px; height: 10px; }
.nav.last { margin-left: auto; }
.tab {
  display: flex;
  align-items: stretch;
  height: 16px;
  margin-left: 6px;
  font-weight: bold;
}
.slope { width: 17px; height: 16px; }
.tab span, .tab button {
  border-top: 1px solid #6f9cd0;
  background: linear-gradient(#e8f4fe, #c8e0fa);
}
.tab span { padding: 0 12px 0 3px; white-space: nowrap; }
.tab button { border-right: 1px solid #6f9cd0; border-radius: 0 3px 0 0; padding-right: 5px; }
.tab button svg { width: 9px; height: 9px; }
.frame {
  flex: 1;
  min-height: 0;
  display: grid;
  grid-template: minmax(0, 1fr) 17px / minmax(0, 1fr) 17px;
  padding: 5px 6px 6px 5px;
  border: 1px solid #9c9cc0;
  background: linear-gradient(#e6e6d8, #e6e6d8) right 6px bottom 6px / 17px 17px no-repeat, #d2d0f8;
  box-shadow: inset 0 0 0 4px #d2d0f8, inset 0 0 0 5px #999;
}
.canvas {
  position: relative;
  margin-left: 2px;
  background:
    linear-gradient(90deg, #000 19px, transparent 0) 0 0 / 20px 20px,
    linear-gradient(#000 19px, #fff 0) 0 0 / 20px 20px;
}
.lamp {
  position: absolute;
  left: 38px;
  width: 56px;
  height: 57px;
  border: solid #fff;
  border-width: 1px 4px 4px 1px;
  font: bold 10px/12px "Liberation Sans", sans-serif;
  color: #f01010;
}
.bl0 { top: 34px; background: #0ff; border-right-color: #0a9090; border-bottom-color: #0a9090; }
.bl1 { top: 101px; background: #ff9a9a; border-right-color: #986060; border-bottom-color: #986060; }

/* status bar */
.status {
  flex: none;
  display: grid;
  grid-template-columns: 328px 1fr 52px 16px;
  align-items: center;
  height: 17px;
  padding-left: 3px;
  border-top: 1px solid #a8a89c;
  background: #e6e6d8;
  font-size: 11px;
}
.status .model { font-size: 10px; }
.status .cell { height: 13px; border-left: 1px solid #b8b8ac; }
.status .corner { background: radial-gradient(circle, #b0b0a4 1px, transparent 2px) right bottom / 4px 4px; }
```
